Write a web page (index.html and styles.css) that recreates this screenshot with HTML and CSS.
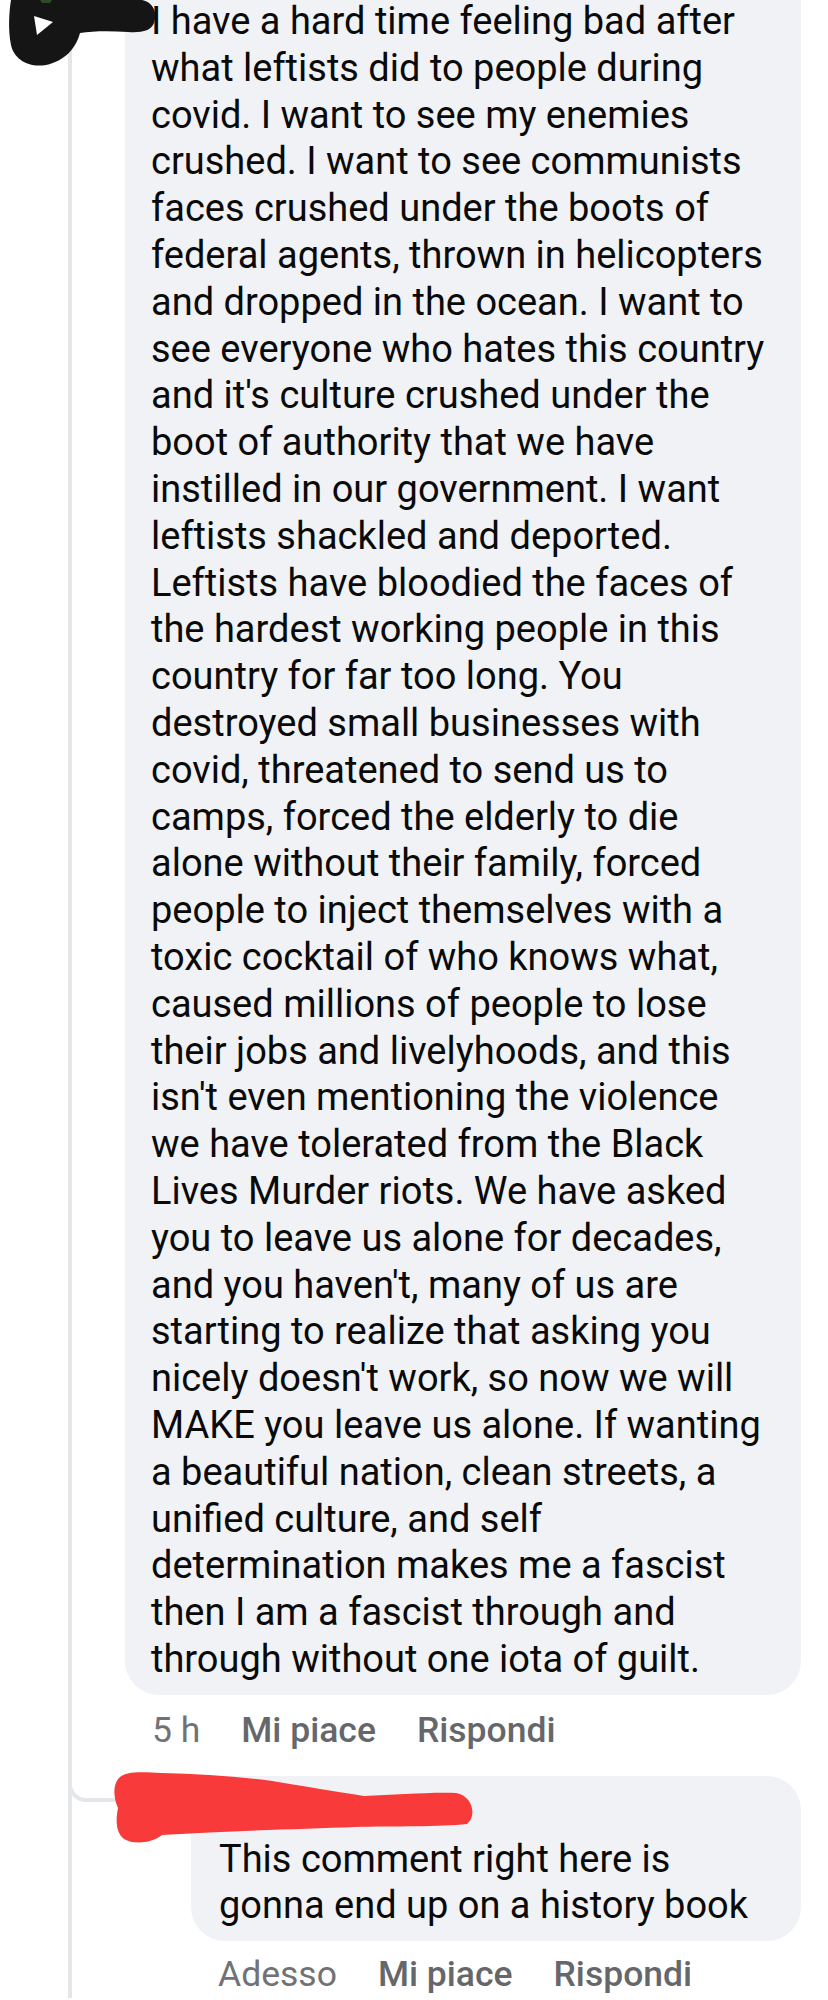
FILE: index.html
```html
<!doctype html>
<html lang="en">
<head>
<meta charset="utf-8">
<title>Commenti</title>
<meta name="viewport" content="width=device-width,initial-scale=1">
<link rel="stylesheet" href="styles.css">
</head>
<body>
<div class="page">

  <div class="thread">
    <div class="comment">
      <div class="bubble main-bubble">
        I have a hard time feeling bad after<br>
        what leftists did to people during<br>
        covid. I want to see my enemies<br>
        crushed. I want to see communists<br>
        faces crushed under the boots of<br>
        federal agents, thrown in helicopters<br>
        and dropped in the ocean. I want to<br>
        see everyone who hates this country<br>
        and it's culture crushed under the<br>
        boot of authority that we have<br>
        instilled in our government. I want<br>
        leftists shackled and deported.<br>
        Leftists have bloodied the faces of<br>
        the hardest working people in this<br>
        country for far too long. You<br>
        destroyed small businesses with<br>
        covid, threatened to send us to<br>
        camps, forced the elderly to die<br>
        alone without their family, forced<br>
        people to inject themselves with a<br>
        toxic cocktail of who knows what,<br>
        caused millions of people to lose<br>
        their jobs and livelyhoods, and this<br>
        isn't even mentioning the violence<br>
        we have tolerated from the Black<br>
        Lives Murder riots. We have asked<br>
        you to leave us alone for decades,<br>
        and you haven't, many of us are<br>
        starting to realize that asking you<br>
        nicely doesn't work, so now we will<br>
        MAKE you leave us alone. If wanting<br>
        a beautiful nation, clean streets, a<br>
        unified culture, and self<br>
        determination makes me a fascist<br>
        then I am a fascist through and<br>
        through without one iota of guilt.
      </div>
      <div class="meta">
        <span class="time">5 h</span>
        <span class="act">Mi piace</span>
        <span class="act">Rispondi</span>
      </div>
    </div>

    <div class="reply">
      <span class="branch"></span>
      <div class="avatar"></div>
      <div class="reply-body">
        <div class="bubble reply-bubble">
          <div class="name"></div>
          This comment right here is<br>
          gonna end up on a history book
        </div>
        <div class="meta">
          <span class="time">Adesso</span>
          <span class="act">Mi piace</span>
          <span class="act">Rispondi</span>
        </div>
      </div>
    </div>
  </div>

  <!-- scribbles drawn over the avatars / names -->
  <svg class="scribble-black" width="160" height="70" viewBox="0 0 160 70">
    <path d="M11,0 L142,0 C153,2 158,13 154,23 C151,31 141,33 128,32 C110,31 93,31 80,33 C76,48 65,61 46,65 C28,68 14,59 11,45 C8,30 9,12 11,0 Z" fill="#151515"/>
    <path d="M40,0 L52,0 L50,3 L42,3 Z" fill="#2f4a2a"/>
    <path d="M34,16 L53,22 L37,35 Z" fill="#fff"/>
  </svg>

  <svg class="scribble-red" width="380" height="90" viewBox="100 1760 380 90">
    <path d="M119,1778 C125,1771 142,1772 162,1773 C205,1774 250,1777 290,1784 C320,1789 345,1793 364,1796 C395,1795 430,1792 456,1793 C473,1796 477,1816 467,1824 C440,1827 395,1826 355,1827 C300,1829 230,1831 162,1835 C152,1843 134,1845 124,1839 C115,1832 116,1818 118,1808 C113,1797 113,1784 119,1778 Z" fill="#f93a3a"/>
  </svg>

</div>
</body>
</html>
```

FILE: styles.css
```css
body{margin:0;background:#fff;font-family:Roboto,"Noto Sans",sans-serif;color:#0a0a0a;}
.page{position:relative;width:828px;height:2000px;overflow:hidden;}

.thread{margin-left:68px;border-left:4px solid #e4e6ea;min-height:2000px;}

.comment{margin-left:53px;}
.bubble{background:#f0f2f5;font-size:38px;line-height:46.8px;white-space:nowrap;}
.main-bubble{width:676px;box-sizing:border-box;margin-top:-2px;padding:0 20px 12px 26px;border-radius:0 0 34px 34px;}

.meta{display:flex;align-items:center;height:40px;margin-top:15px;padding-left:27px;font-size:35.5px;color:#65676b;}
.meta span{margin-right:41px;}
.meta .time{color:#707276;}
.meta .act{font-weight:500;}

.reply{position:relative;display:flex;margin-top:26px;padding-left:45px;}
.branch{position:absolute;left:-4px;top:-4px;width:48px;height:30px;box-sizing:border-box;border-left:4px solid #e4e6ea;border-bottom:4px solid #e4e6ea;border-bottom-left-radius:18px;}
.avatar{width:56px;height:56px;flex:none;margin-right:18px;}
.reply-bubble{width:610px;box-sizing:border-box;padding:10px 20px 12px 28px;border-radius:34px;}
.reply-bubble .name{height:50px;}
.reply-body .meta{margin-top:13px;}

.scribble-black{position:absolute;left:0;top:0;}
.scribble-red{position:absolute;left:100px;top:1760px;}
```
